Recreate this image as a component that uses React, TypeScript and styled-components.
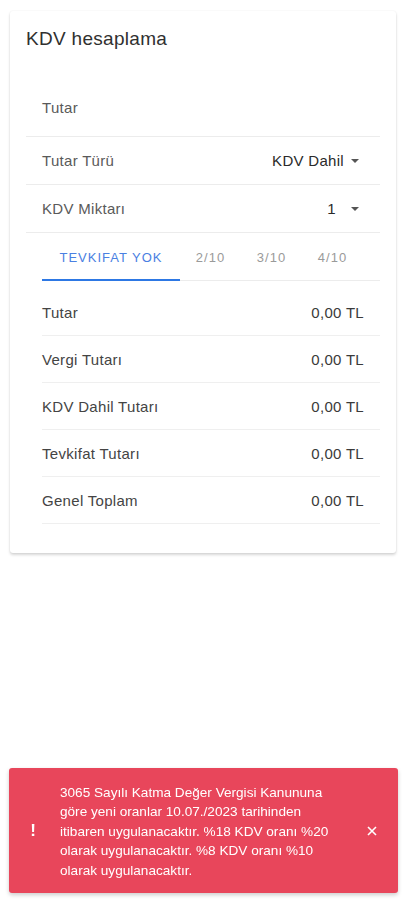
import React from "react";
import styled, { createGlobalStyle } from "styled-components";

const GlobalStyle = createGlobalStyle`
  * { box-sizing: border-box; }
  html, body {
    margin: 0;
    padding: 0;
    background: #ffffff;
    font-family: "Liberation Sans", Arial, sans-serif;
  }
`;

const Page = styled.div`
  padding: 11px 10px 0 10px;
  min-height: 900px;
`;

const Card = styled.div`
  width: 386px;
  background: #fff;
  border-radius: 3px;
  box-shadow: 0 2px 3px rgba(0, 0, 0, 0.16), 0 0 2px rgba(0, 0, 0, 0.07);
  padding-bottom: 29px;
`;

const Title = styled.h1`
  margin: 0;
  padding: 16px 16px 0;
  font-size: 19px;
  letter-spacing: 0.3px;
  line-height: 24px;
  font-weight: 400;
  color: #303030;
`;

const Form = styled.div`
  margin: 0 16px;
`;

const AmountField = styled.div`
  height: 86px;
  display: flex;
  align-items: flex-end;
  padding: 0 16px 19px;
  border-bottom: 1px solid #ececec;
  font-size: 15px;
  letter-spacing: 0.3px;
  line-height: 18px;
  color: #5a5a5a;
`;

const SelectRow = styled.div`
  height: 48px;
  display: flex;
  align-items: center;
  justify-content: space-between;
  padding: 0 21px 0 16px;
  border-bottom: 1px solid #ececec;
  font-size: 15px;
  letter-spacing: 0.3px;
  color: #5a5a5a;
`;

const SelectValue = styled.div<{ $gap: number }>`
  display: flex;
  align-items: center;
  gap: ${(p) => p.$gap}px;
  color: #2a2a2a;
`;

const Caret = styled.span`
  width: 0;
  height: 0;
  border-left: 4px solid transparent;
  border-right: 4px solid transparent;
  border-top: 4px solid #555;
`;

const Tabs = styled.div`
  margin: 0 16px 0 32px;
  height: 48px;
  display: flex;
  border-bottom: 1px solid #ececec;
`;

const Tab = styled.div<{ $active?: boolean; $width: number }>`
  width: ${(p) => p.$width}px;
  display: flex;
  align-items: center;
  justify-content: center;
  font-size: 13px;
  letter-spacing: 1px;
  text-transform: uppercase;
  color: ${(p) => (p.$active ? "#4a80e2" : "#9a9a9a")};
  border-bottom: 2px solid ${(p) => (p.$active ? "#2d78e4" : "transparent")};
  margin-bottom: -1px;
  padding-top: 2px;
`;

const Results = styled.div`
  margin: 0 16px 0 32px;
  padding-top: 8px;
`;

const ResultRow = styled.div`
  height: 47px;
  display: flex;
  align-items: center;
  justify-content: space-between;
  padding: 0 16px 0 0;
  border-bottom: 1px solid #efefef;
  font-size: 15px;
  letter-spacing: 0.3px;
`;

const ResultLabel = styled.span`
  color: #444;
`;

const ResultValue = styled.span`
  color: #3a3a3a;
`;

const Toast = styled.div`
  position: fixed;
  left: 9px;
  right: 8px;
  bottom: 7px;
  background: #e8465b;
  border-radius: 3px;
  box-shadow: 0 2px 4px rgba(0, 0, 0, 0.2);
  display: flex;
  align-items: center;
  padding: 15px 0 13px 0;
  color: #fff;
`;

const ToastIcon = styled.div`
  width: 28px;
  margin-left: 10px;
  text-align: center;
  font-size: 17px;
  font-weight: 700;
  line-height: 20px;
`;

const ToastText = styled.div`
  width: 280px;
  margin-left: 13px;
  font-size: 13.6px;
  line-height: 19.5px;
`;

const CloseButton = styled.div`
  flex: 1;
  display: flex;
  align-items: center;
  justify-content: center;
  padding-left: 6px;
`;

const results = [
  "Tutar",
  "Vergi Tutarı",
  "KDV Dahil Tutarı",
  "Tevkifat Tutarı",
  "Genel Toplam",
];

const tabs = [
  { label: "TEVKIFAT YOK", width: 138, active: true },
  { label: "2/10", width: 61 },
  { label: "3/10", width: 61 },
  { label: "4/10", width: 61 },
];

export default function App() {
  return (
    <>
      <GlobalStyle />
      <Page>
        <Card>
          <Title>KDV hesaplama</Title>
          <Form>
            <AmountField>Tutar</AmountField>
            <SelectRow>
              <span>Tutar Türü</span>
              <SelectValue $gap={7}>
                KDV Dahil
                <Caret />
              </SelectValue>
            </SelectRow>
            <SelectRow>
              <span>KDV Miktarı</span>
              <SelectValue $gap={15}>
                1
                <Caret />
              </SelectValue>
            </SelectRow>
          </Form>
          <Tabs>
            {tabs.map((t) => (
              <Tab key={t.label} $active={t.active} $width={t.width}>
                {t.label}
              </Tab>
            ))}
          </Tabs>
          <Results>
            {results.map((r) => (
              <ResultRow key={r}>
                <ResultLabel>{r}</ResultLabel>
                <ResultValue>0,00 TL</ResultValue>
              </ResultRow>
            ))}
          </Results>
        </Card>
      </Page>
      <Toast>
        <ToastIcon>!</ToastIcon>
        <ToastText>
          3065 Sayılı Katma Değer Vergisi Kanununa göre yeni oranlar
          10.07./2023 tarihinden itibaren uygulanacaktır. %18 KDV oranı %20
          olarak uygulanacaktır. %8 KDV oranı %10 olarak uygulanacaktır.
        </ToastText>
        <CloseButton>
          <svg width="10" height="10" viewBox="0 0 10 10">
            <path d="M1 1 L9 9 M9 1 L1 9" stroke="#fff" strokeWidth="1.6" />
          </svg>
        </CloseButton>
      </Toast>
    </>
  );
}
